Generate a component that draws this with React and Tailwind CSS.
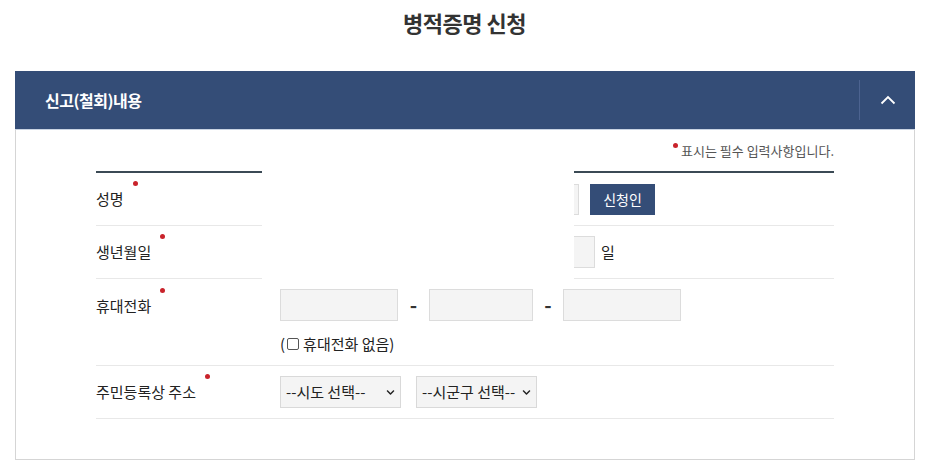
import { FaChevronDown } from 'react-icons/fa';

const FONT = { fontFamily: '"Noto Sans CJK KR", "Noto Sans", sans-serif' };

function Label({ children }) {
  return (
    <span className="relative text-[15px] text-[#222]">
      {children}
      <span className="absolute -right-[14px] -top-[7px] w-[5px] h-[5px] rounded-full bg-[#c9232b]"></span>
    </span>
  );
}

function Select({ label, width }) {
  return (
    <div className={`relative h-[32px] ${width}`}>
      <select className="appearance-none w-full h-full bg-[#f4f4f4] border border-[#d9d9d9] pl-[5px] text-[15px] text-[#222] outline-none">
        <option>{label}</option>
      </select>
      <FaChevronDown className="absolute right-[6px] top-[12px] w-[9px] h-[9px] text-[#222] pointer-events-none" />
    </div>
  );
}

export default function App() {
  return (
    <div className="w-[929px] bg-white" style={FONT}>
      <div className="h-[44px] flex items-center justify-center mb-[27px]">
        <h1 className="text-[22px] font-bold text-[#333] tracking-[-0.5px]">병적증명 신청</h1>
      </div>

      <div className="ml-[15px] w-[900px] border-x border-b border-[#d5d5d5]">
        <div className="h-[59px] -mx-px bg-[#344d77] flex items-center border-b border-[#c9d3e2]">
          <h2 className="flex-1 pl-[30px] text-[16px] font-bold text-white tracking-[-0.5px]">신고(철회)내용</h2>
          <div className="w-[56px] h-[40px] border-l border-[#4c6390] flex items-center justify-center">
            <svg width="16" height="10" viewBox="0 0 16 10" fill="none">
              <path d="M1.5 8.5L8 2l6.5 6.5" stroke="white" strokeWidth="1.8" />
            </svg>
          </div>
        </div>

        <div className="px-[80px] pt-[12px] pb-[40px]">
          <div className="flex justify-end mb-[11px] h-[18px]">
            <span className="relative text-[13px] leading-[18px] text-[#555] pl-[8px]">
              <span className="absolute left-0 top-[1px] w-[5px] h-[5px] rounded-full bg-[#c9232b]"></span>
              표시는 필수 입력사항입니다.
            </span>
          </div>

          {/* 성명 */}
          <div className="flex h-[55px]">
            <div className="w-[166px] border-t-2 border-b border-t-[#3b4a55] border-b-[#e8e8e8] flex items-center">
              <Label>성명</Label>
            </div>
            <div className="w-[312px]"></div>
            <div className="flex-1 border-t-2 border-b border-t-[#3b4a55] border-b-[#e8e8e8] flex items-center">
              <div className="w-[5px] h-[31px] bg-[#f4f4f4] border-y border-r border-[#dcdcdc]"></div>
              <button type="button" className="ml-[11px] w-[65px] h-[31px] bg-[#344d77] text-white text-[14px]">
                신청인
              </button>
            </div>
          </div>

          {/* 생년월일 */}
          <div className="flex h-[53px]">
            <div className="w-[166px] border-b border-[#e8e8e8] flex items-center">
              <Label>생년월일</Label>
            </div>
            <div className="w-[312px]"></div>
            <div className="flex-1 border-b border-[#e8e8e8] flex items-center">
              <div className="w-[21px] h-[32px] bg-[#f4f4f4] border-y border-r border-[#dcdcdc]"></div>
              <span className="ml-[6px] text-[15px] text-[#222]">일</span>
            </div>
          </div>

          {/* 휴대전화 */}
          <div className="flex h-[87px] border-b border-[#e8e8e8]">
            <div className="w-[166px] pt-[14px]">
              <Label>휴대전화</Label>
            </div>
            <div className="flex-1 pl-[18px] pt-[10px]">
              <div className="flex items-center">
                <div className="w-[118px] h-[32px] bg-[#f4f4f4] border border-[#dcdcdc]"></div>
                <span className="w-[31px] text-center font-bold text-[20px] leading-none text-[#333]">-</span>
                <div className="w-[104px] h-[32px] bg-[#f4f4f4] border border-[#dcdcdc]"></div>
                <span className="w-[30px] text-center font-bold text-[20px] leading-none text-[#333]">-</span>
                <div className="w-[118px] h-[32px] bg-[#f4f4f4] border border-[#dcdcdc]"></div>
              </div>
              <label className="mt-[12px] flex items-center text-[15px] text-[#222]">
                (
                <span className="ml-[2px] mr-[4px] w-[12px] h-[12px] border border-[#555] rounded-[2px] bg-white"></span>
                휴대전화 없음)
              </label>
            </div>
          </div>

          {/* 주소 */}
          <div className="flex h-[53px] border-b border-[#e8e8e8]">
            <div className="w-[166px] flex items-center">
              <Label>주민등록상 주소</Label>
            </div>
            <div className="flex-1 pl-[18px] flex items-center gap-[15px]">
              <Select label="--시도 선택--" width="w-[121px]" />
              <Select label="--시군구 선택--" width="w-[121px]" />
            </div>
          </div>
        </div>
      </div>
    </div>
  );
}
